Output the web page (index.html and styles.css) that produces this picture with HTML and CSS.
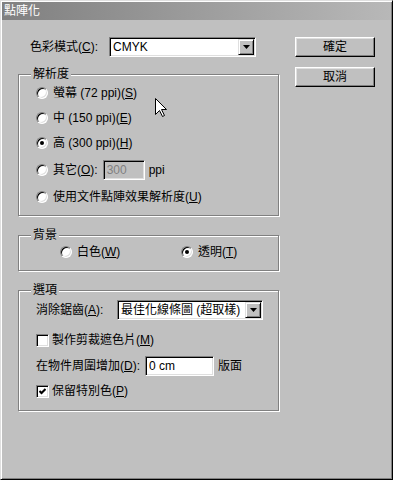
FILE: index.html
```html
<!DOCTYPE html>
<html lang="zh-Hant">
  <head>
    <meta charset="UTF-8" />
    <meta name="viewport" content="width=device-width, initial-scale=1.0" />
    <title>點陣化</title>
    <link rel="stylesheet" href="styles.css">
  </head>
  <body>
    <div class="window">
      <div class="titlebar">點陣化</div>

      <div class="dialog-body">
        <div class="main">
          <div class="row top-row">
            <span class="lbl">色彩模式(<u>C</u>):</span>
            <div class="select sunken color-select">
              <span class="select-value">CMYK</span>
              <span class="drop-btn"><svg width="7" height="4" viewBox="0 0 7 4"><polygon points="0,0 7,0 3.5,4" fill="#000" /></svg></span>
            </div>
          </div>

          <div class="group res-group">
            <div class="group-title">解析度</div>
            <div class="res-list">
              <div class="row opt"><span class="radio"></span>螢幕 (72 ppi)(<u>S</u>)</div>
              <div class="row opt"><span class="radio"></span>中 (150 ppi)(<u>E</u>)</div>
              <div class="row opt"><span class="radio checked"></span>高 (300 ppi)(<u>H</u>)</div>
              <div class="row opt row-other">
                <span class="radio"></span>其它(<u>O</u>):
                <span class="sunken text-input field-disabled">300</span>
                <span class="unit">ppi</span>
              </div>
              <div class="row opt row-doc"><span class="radio"></span>使用文件點陣效果解析度(<u>U</u>)</div>
            </div>
          </div>

          <div class="group bg-group">
            <div class="group-title">背景</div>
            <div class="row bg-row">
              <div class="opt"><span class="radio"></span>白色(<u>W</u>)</div>
              <div class="opt"><span class="radio checked"></span>透明(<u>T</u>)</div>
            </div>
          </div>

          <div class="group opt-group">
            <div class="group-title">選項</div>
            <div class="opt-list">
              <div class="row aa-row">
                <span class="lbl">消除鋸齒(<u>A</u>):</span>
                <div class="select sunken aa-select">
                  <span class="select-value">最佳化線條圖 (超取樣)</span>
                  <span class="drop-btn"><svg width="7" height="4" viewBox="0 0 7 4"><polygon points="0,0 7,0 3.5,4" fill="#000" /></svg></span>
                </div>
              </div>
              <div class="row opt row-mask"><span class="check"></span>製作剪裁遮色片(<u>M</u>)</div>
              <div class="row row-margin">
                <span class="lbl">在物件周圍增加(<u>D</u>):</span>
                <span class="sunken text-input margin-input">0 cm</span>
                <span class="unit">版面</span>
              </div>
              <div class="row opt row-spot">
                <span class="check"><svg width="7" height="7" viewBox="0 0 7 7"><polyline points="0.5,3 2.5,5 6.5,1" fill="none" stroke="#000" stroke-width="2" /></svg></span>保留特別色(<u>P</u>)
              </div>
            </div>
          </div>
        </div>

        <div class="buttons">
          <button class="btn">確定</button>
          <button class="btn">取消</button>
        </div>
      </div>

      <svg class="cursor" width="12" height="20" viewBox="0 0 12 20">
        <path d="M0.5 0.5 V16.5 L4.5 12.5 L7.5 18.5 L9.5 17.5 L6.5 11.5 H11.5 Z" fill="#fff" stroke="#000" stroke-width="1" />
      </svg>
    </div>
  </body>
</html>
```

FILE: styles.css
```css
* {
  margin: 0;
  padding: 0;
  box-sizing: border-box;
}

body {
  background: #c0c0c0;
  font-family: "Liberation Sans", "Noto Sans CJK TC", sans-serif;
  font-size: 12px;
  line-height: 14px;
  color: #000;
}

u {
  text-underline-offset: 1px;
}

.window {
  position: relative;
  width: 393px;
  height: 480px;
  padding: 1px;
  background: #c0c0c0;
  border: 1px solid;
  border-color: #dfdfdf #000 #000 #dfdfdf;
  box-shadow: inset 1px 1px 0 #fff, inset -1px -1px 0 #808080;
}

.titlebar {
  height: 18px;
  line-height: 18px;
  padding-left: 2px;
  color: #fff;
  background: linear-gradient(to right, #808080, #b8b8b8);
}

.dialog-body {
  display: flex;
  padding: 17px 0 0 16px;
}

.main {
  width: 261px;
}

.buttons {
  display: flex;
  flex-direction: column;
  gap: 10px;
  margin-left: 16px;
}

.btn {
  width: 80px;
  height: 20px;
  font: inherit;
  color: #000;
  background: #c0c0c0;
  border: 1px solid;
  border-color: #fff #000 #000 #fff;
  box-shadow: inset -1px -1px 0 #808080, inset 1px 1px 0 #dfdfdf;
}

.row {
  display: flex;
  align-items: center;
  height: 20px;
  white-space: nowrap;
}

.opt {
  display: flex;
  align-items: center;
}

.sunken {
  border: 1px solid;
  border-color: #808080 #fff #fff #808080;
  box-shadow: inset 1px 1px 0 #000, inset -1px -1px 0 #dfdfdf;
  background: #fff;
}

/* combo boxes */
.select {
  display: flex;
  align-items: center;
  height: 20px;
  padding: 1px;
}

.select-value {
  flex: 1;
  padding-left: 2px;
  overflow: hidden;
  white-space: nowrap;
}

.drop-btn {
  flex: none;
  display: flex;
  align-items: center;
  justify-content: center;
  width: 16px;
  height: 16px;
  background: #c0c0c0;
  border: 1px solid;
  border-color: #dfdfdf #000 #000 #dfdfdf;
  box-shadow: inset 1px 1px 0 #fff, inset -1px -1px 0 #808080;
}

.top-row .lbl {
  width: 91px;
  padding-left: 12px;
}

.color-select {
  width: 147px;
}

/* group boxes */
.group {
  border: 1px solid #808080;
  box-shadow: 1px 1px 0 #fff, inset 1px 1px 0 #fff;
}

.group-title {
  width: fit-content;
  height: 14px;
  margin: -8px 0 0 12px;
  padding: 0 2px;
  background: #c0c0c0;
}

.res-group {
  margin-top: 17px;
  height: 142px;
}

.res-list {
  display: flex;
  flex-direction: column;
  gap: 5px;
  padding: 2px 0 0 17px;
}

.res-list .row-other,
.res-list .row-doc {
  margin-top: 2px;
}

.bg-group {
  margin-top: 19px;
  height: 36px;
}

.bg-row {
  padding-left: 41px;
}

.bg-row .opt:first-child {
  width: 121px;
}

.opt-group {
  margin-top: 19px;
  height: 121px;
}

.opt-list {
  display: flex;
  flex-direction: column;
  padding: 3px 0 0 17px;
}

.row-mask {
  margin-top: 10px;
}

.row-margin {
  margin-top: 6px;
}

.row-spot {
  margin-top: 5px;
}

.aa-row .lbl {
  width: 81px;
}

.aa-select {
  width: 146px;
}

.row-margin .lbl {
  width: 109px;
}

/* radio + check */
.radio {
  flex: none;
  display: flex;
  align-items: center;
  justify-content: center;
  width: 12px;
  height: 12px;
  margin-right: 5px;
  border-radius: 50%;
  background: #fff;
  border: 1px solid;
  border-color: #808080 #fff #fff #808080;
  box-shadow: inset 1px 1px 0 #000, inset -1px -1px 0 #dfdfdf;
}

.radio.checked::after {
  content: "";
  width: 4px;
  height: 4px;
  border-radius: 50%;
  background: #000;
}

.check {
  flex: none;
  display: flex;
  align-items: center;
  justify-content: center;
  width: 13px;
  height: 13px;
  margin-right: 3px;
  background: #fff;
  border: 1px solid;
  border-color: #808080 #fff #fff #808080;
  box-shadow: inset 1px 1px 0 #000, inset -1px -1px 0 #dfdfdf;
}

/* text fields */
.text-input {
  display: flex;
  align-items: center;
  height: 20px;
  padding-left: 3px;
}

.field-disabled {
  width: 42px;
  margin-left: 5px;
  color: #808080;
  background: #c0c0c0;
}

.margin-input {
  width: 69px;
}

.unit {
  margin-left: 4px;
}

.cursor {
  position: absolute;
  left: 154px;
  top: 97px;
}
```
